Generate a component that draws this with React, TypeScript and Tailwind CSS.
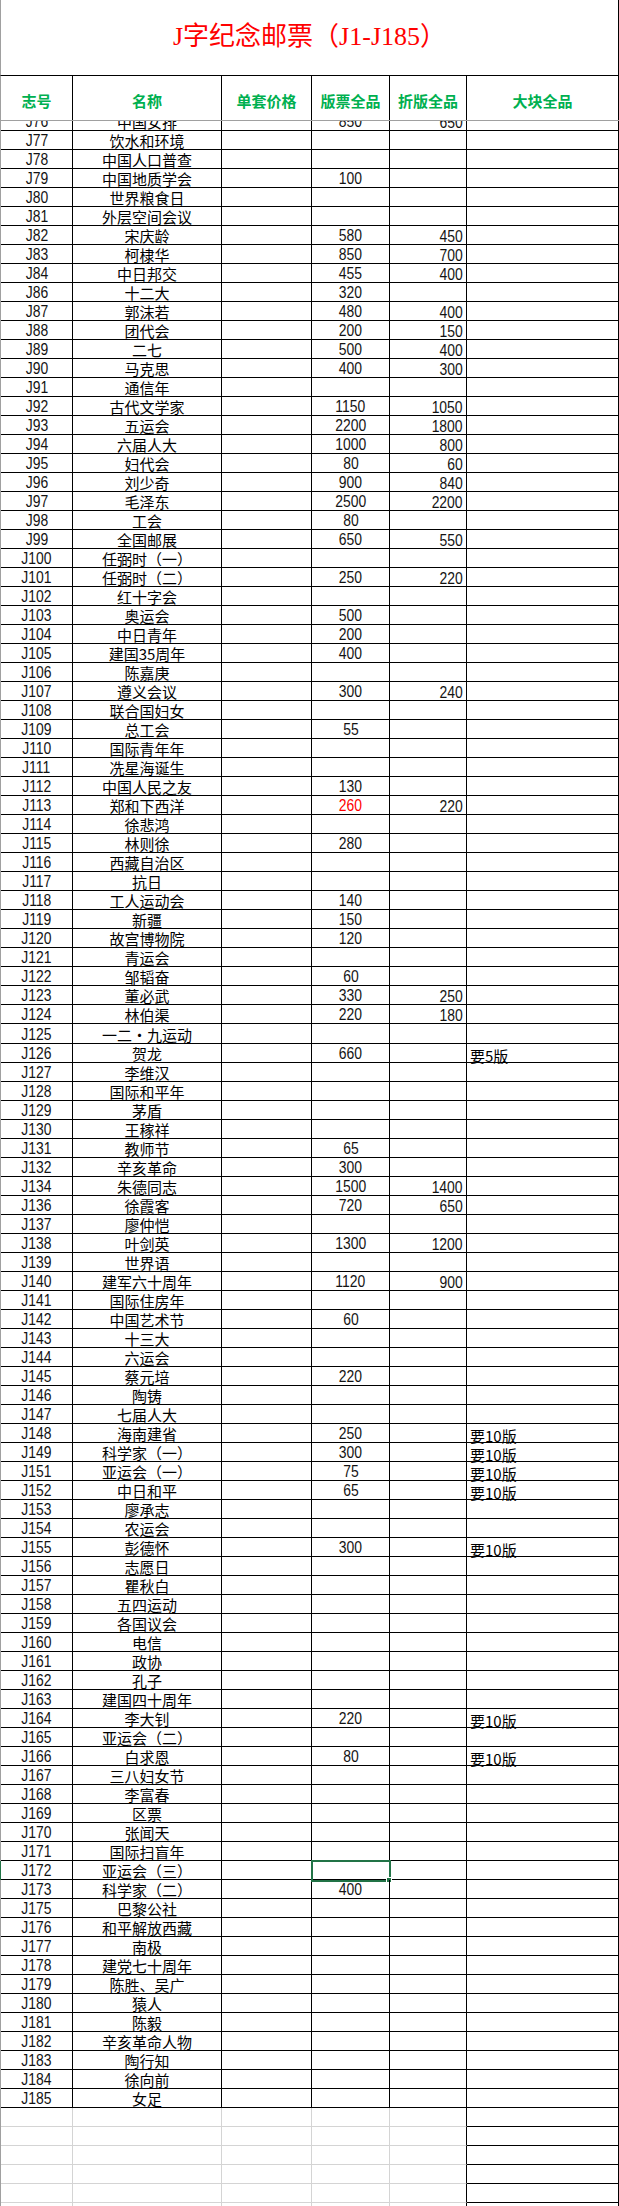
import React from 'react'

type Row = {
  code: string
  name: string
  full?: string
  fold?: string
  block?: string
  red?: boolean
  tall?: boolean
}

const rows: Row[] = [
  { code: 'J77', name: '饮水和环境' },
  { code: 'J78', name: '中国人口普查' },
  { code: 'J79', name: '中国地质学会', full: '100' },
  { code: 'J80', name: '世界粮食日' },
  { code: 'J81', name: '外层空间会议' },
  { code: 'J82', name: '宋庆龄', full: '580', fold: '450' },
  { code: 'J83', name: '柯棣华', full: '850', fold: '700' },
  { code: 'J84', name: '中日邦交', full: '455', fold: '400' },
  { code: 'J86', name: '十二大', full: '320' },
  { code: 'J87', name: '郭沫若', full: '480', fold: '400' },
  { code: 'J88', name: '团代会', full: '200', fold: '150' },
  { code: 'J89', name: '二七', full: '500', fold: '400' },
  { code: 'J90', name: '马克思', full: '400', fold: '300' },
  { code: 'J91', name: '通信年' },
  { code: 'J92', name: '古代文学家', full: '1150', fold: '1050' },
  { code: 'J93', name: '五运会', full: '2200', fold: '1800' },
  { code: 'J94', name: '六届人大', full: '1000', fold: '800' },
  { code: 'J95', name: '妇代会', full: '80', fold: '60' },
  { code: 'J96', name: '刘少奇', full: '900', fold: '840' },
  { code: 'J97', name: '毛泽东', full: '2500', fold: '2200' },
  { code: 'J98', name: '工会', full: '80' },
  { code: 'J99', name: '全国邮展', full: '650', fold: '550' },
  { code: 'J100', name: '任弼时（一）' },
  { code: 'J101', name: '任弼时（二）', full: '250', fold: '220' },
  { code: 'J102', name: '红十字会' },
  { code: 'J103', name: '奥运会', full: '500' },
  { code: 'J104', name: '中日青年', full: '200' },
  { code: 'J105', name: '建国35周年', full: '400' },
  { code: 'J106', name: '陈嘉庚' },
  { code: 'J107', name: '遵义会议', full: '300', fold: '240' },
  { code: 'J108', name: '联合国妇女' },
  { code: 'J109', name: '总工会', full: '55' },
  { code: 'J110', name: '国际青年年' },
  { code: 'J111', name: '冼星海诞生' },
  { code: 'J112', name: '中国人民之友', full: '130' },
  { code: 'J113', name: '郑和下西洋', full: '260', fold: '220', red: true },
  { code: 'J114', name: '徐悲鸿' },
  { code: 'J115', name: '林则徐', full: '280' },
  { code: 'J116', name: '西藏自治区' },
  { code: 'J117', name: '抗日' },
  { code: 'J118', name: '工人运动会', full: '140' },
  { code: 'J119', name: '新疆', full: '150' },
  { code: 'J120', name: '故宫博物院', full: '120' },
  { code: 'J121', name: '青运会' },
  { code: 'J122', name: '邹韬奋', full: '60' },
  { code: 'J123', name: '董必武', full: '330', fold: '250' },
  { code: 'J124', name: '林伯渠', full: '220', fold: '180' },
  { code: 'J125', name: '一二·九运动', tall: true },
  { code: 'J126', name: '贺龙', full: '660', block: '要5版' },
  { code: 'J127', name: '李维汉' },
  { code: 'J128', name: '国际和平年' },
  { code: 'J129', name: '茅盾' },
  { code: 'J130', name: '王稼祥' },
  { code: 'J131', name: '教师节', full: '65' },
  { code: 'J132', name: '辛亥革命', full: '300' },
  { code: 'J134', name: '朱德同志', full: '1500', fold: '1400' },
  { code: 'J136', name: '徐霞客', full: '720', fold: '650' },
  { code: 'J137', name: '廖仲恺' },
  { code: 'J138', name: '叶剑英', full: '1300', fold: '1200' },
  { code: 'J139', name: '世界语' },
  { code: 'J140', name: '建军六十周年', full: '1120', fold: '900' },
  { code: 'J141', name: '国际住房年' },
  { code: 'J142', name: '中国艺术节', full: '60' },
  { code: 'J143', name: '十三大' },
  { code: 'J144', name: '六运会' },
  { code: 'J145', name: '蔡元培', full: '220' },
  { code: 'J146', name: '陶铸' },
  { code: 'J147', name: '七届人大' },
  { code: 'J148', name: '海南建省', full: '250', block: '要10版' },
  { code: 'J149', name: '科学家（一）', full: '300', block: '要10版' },
  { code: 'J151', name: '亚运会（一）', full: '75', block: '要10版' },
  { code: 'J152', name: '中日和平', full: '65', block: '要10版' },
  { code: 'J153', name: '廖承志' },
  { code: 'J154', name: '农运会' },
  { code: 'J155', name: '彭德怀', full: '300', block: '要10版' },
  { code: 'J156', name: '志愿日' },
  { code: 'J157', name: '瞿秋白' },
  { code: 'J158', name: '五四运动' },
  { code: 'J159', name: '各国议会' },
  { code: 'J160', name: '电信' },
  { code: 'J161', name: '政协' },
  { code: 'J162', name: '孔子' },
  { code: 'J163', name: '建国四十周年' },
  { code: 'J164', name: '李大钊', full: '220', block: '要10版' },
  { code: 'J165', name: '亚运会（二）' },
  { code: 'J166', name: '白求恩', full: '80', block: '要10版' },
  { code: 'J167', name: '三八妇女节' },
  { code: 'J168', name: '李富春' },
  { code: 'J169', name: '区票' },
  { code: 'J170', name: '张闻天' },
  { code: 'J171', name: '国际扫盲年' },
  { code: 'J172', name: '亚运会（三）' },
  { code: 'J173', name: '科学家（二）', full: '400' },
  { code: 'J175', name: '巴黎公社' },
  { code: 'J176', name: '和平解放西藏' },
  { code: 'J177', name: '南极' },
  { code: 'J178', name: '建党七十周年' },
  { code: 'J179', name: '陈胜、吴广' },
  { code: 'J180', name: '猿人' },
  { code: 'J181', name: '陈毅' },
  { code: 'J182', name: '辛亥革命人物' },
  { code: 'J183', name: '陶行知' },
  { code: 'J184', name: '徐向前' },
  { code: 'J185', name: '女足' },
]

const cols = 'grid grid-cols-[72px_149px_90px_78px_77px_152px]'
const cjk = "font-['Noto_Sans_CJK_SC',sans-serif]"

function Num({ children, right, red }: { children: React.ReactNode; right?: boolean; red?: boolean }) {
  return (
    <span
      className={`inline-block scale-x-[0.87] font-['Liberation_Sans',sans-serif] text-[16px] leading-none ${
        right ? 'origin-right' : ''
      } ${red ? 'text-[#ff0000]' : 'text-[#141414]'}`}
    >
      {children}
    </span>
  )
}

function DataRow({ r }: { r: Row }) {
  const selected = r.code === 'J172'
  const cell = `border-r border-b border-black ${r.tall ? 'h-[20px]' : 'h-[19px]'}`
  return (
    <div className={`${cols} border-l ${selected ? 'border-l-[#217346]' : 'border-l-[#a0a0a0]'}`}>
      <div className={`${cell} flex items-center justify-center pt-[2px]`}>
        <Num>{r.code}</Num>
      </div>
      <div className={`${cell} flex items-center justify-center pt-[1px] ${cjk} text-[15px] leading-none text-black whitespace-nowrap`}>
        {r.name}
      </div>
      <div className={cell} />
      <div className={`${cell} relative flex items-center justify-center pt-[2px]`}>
        {r.full && <Num red={r.red}>{r.full}</Num>}
        {selected && (
          <div className="absolute left-[-1px] top-[-1px] right-[-2px] bottom-[-3px] border-2 border-[#217346]">
            <div className="absolute right-[-3px] bottom-[-3px] w-[6px] h-[6px] bg-[#217346] border border-white" />
          </div>
        )}
      </div>
      <div className={`${cell} flex items-center justify-end pr-[3px] pt-[4px]`}>
        {r.fold && <Num right>{r.fold}</Num>}
      </div>
      <div className={`${cell} flex items-center pl-[3px] pt-[4px] ${cjk} text-[15px] leading-none text-black whitespace-nowrap`}>
        {r.block}
      </div>
    </div>
  )
}

function EmptyRow() {
  const grid = 'h-[19px] border-r border-b border-[#d4d4d4]'
  return (
    <div className={`${cols} border-l border-l-[#a0a0a0]`}>
      <div className={grid} />
      <div className={grid} />
      <div className={grid} />
      <div className={grid} />
      <div className="h-[19px] border-b border-b-[#d4d4d4] border-r border-r-black" />
      <div className="h-[19px] border-r border-b border-black" />
    </div>
  )
}

const headers = ['志号', '名称', '单套价格', '版票全品', '折版全品', '大块全品']

export default function App() {
  return (
    <div className="w-[619px] h-[2206px] overflow-hidden bg-white">
      <div className="h-[76px] border-l border-l-[#a0a0a0] border-r border-r-black border-b border-b-black flex items-center justify-center pb-[1px]">
        <span className="font-['Liberation_Serif','Noto_Sans_CJK_SC',serif] text-[26px] leading-none text-[#ff0000] whitespace-nowrap">
          J字纪念邮票（J1-J185）
        </span>
      </div>

      <div className={`${cols} border-l border-l-[#a0a0a0]`}>
        {headers.map((h) => (
          <div
            key={h}
            className={`h-[44px] border-r border-black flex items-center justify-center pt-[4px] ${cjk} text-[15px] font-bold text-[#00b050] leading-none`}
          >
            {h}
          </div>
        ))}
      </div>
      <div className="h-[1px] bg-[#a0a0a0]" />

      <div className="h-[10px] overflow-hidden">
        <div className="-mt-[9px]">
          <DataRow r={{ code: 'J76', name: '中国女排', full: '850', fold: '650' }} />
        </div>
      </div>

      {rows.map((r) => (
        <DataRow key={r.code} r={r} />
      ))}

      {Array.from({ length: 6 }).map((_, i) => (
        <EmptyRow key={i} />
      ))}
    </div>
  )
}
